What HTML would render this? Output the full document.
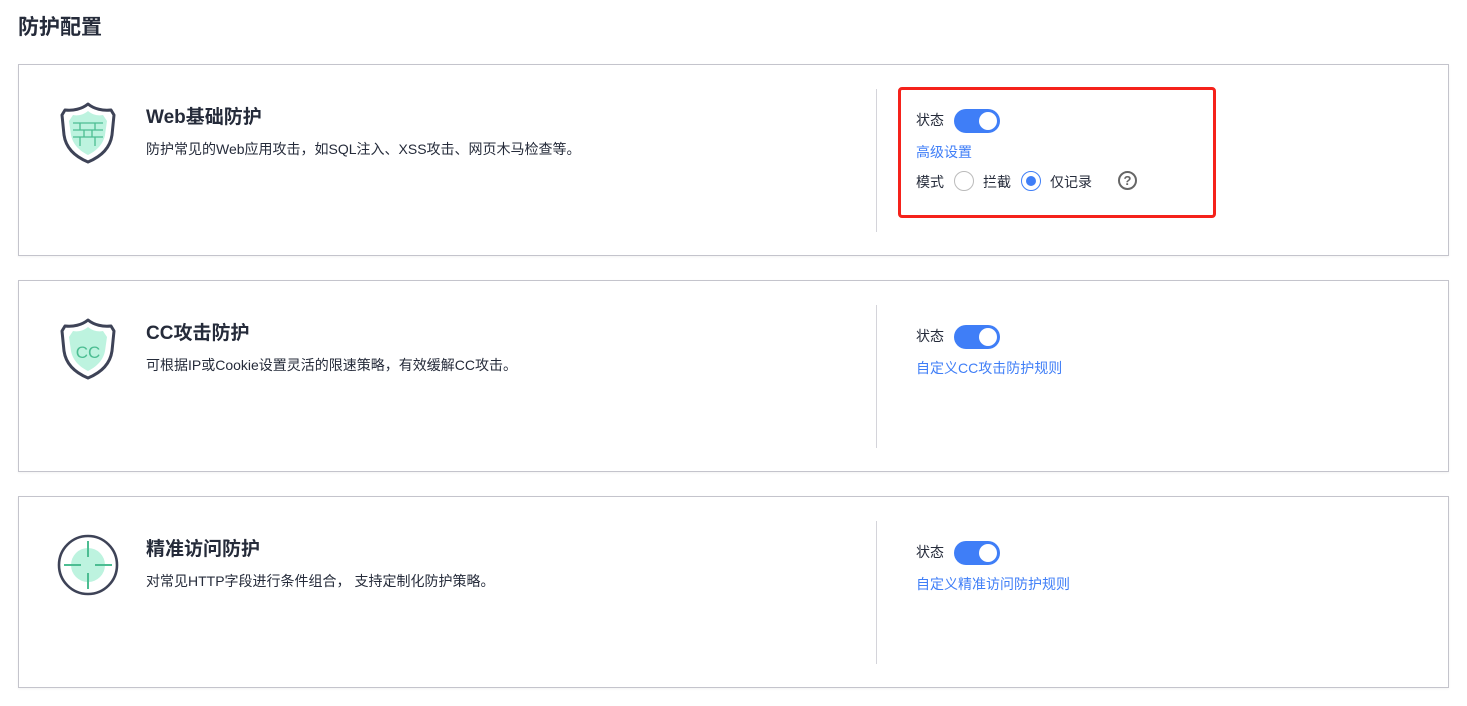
<!DOCTYPE html><html><head><meta charset="utf-8"><style>
body{margin:0;width:1467px;height:706px;background:#fff;font-family:"Liberation Sans","Noto Sans CJK SC",sans-serif;color:#252b3a;position:relative;overflow:hidden}
.h{position:absolute;left:18px;top:11px;font-size:21px;font-weight:bold;color:#252b3a}
.card{position:absolute;left:18px;width:1431px;height:192px;border:1px solid #c4c4cc;box-sizing:border-box;box-shadow:0 1px 2px rgba(0,0,0,.05)}
.ic{position:absolute;left:37px;top:36px}
.t{position:absolute;left:127px;top:41px;font-size:19px;font-weight:bold;line-height:24px}
.d{position:absolute;left:127px;top:75px;font-size:14px;line-height:18px}
.div{position:absolute;left:857px;top:24px;width:1px;height:143px;background:#d4d4da}
.s{position:absolute;left:897px;font-size:14px;line-height:18px}
.tg{position:absolute;left:935px;width:46px;height:24px;border-radius:12px;background:#3f7ef7}
.tg:after{content:"";position:absolute;right:3px;top:3px;width:18px;height:18px;border-radius:50%;background:#fff}
.a{position:absolute;left:897px;font-size:14px;line-height:18px;color:#3f7ef7}
.r{position:absolute;width:20px;height:20px;border:1px solid #bbb;border-radius:50%;box-sizing:border-box}
.red{position:absolute;left:898px;top:87px;width:318px;height:131px;border:3px solid #f5221b;border-radius:4px;box-sizing:border-box}
</style></head><body>
<div class="h">防护配置</div>

<div class="card" style="top:64px">
<svg class="ic" width="64" height="64" viewBox="0 0 62 64"><path d="M31 10 C36 14 41 15 46 14 L50 20 L48 34 C46 44 39 50 31 54 C23 50 16 44 14 34 L12 20 L16 14 C21 15 26 14 31 10Z" fill="#bdf3df"/><g stroke="#4cbd92" stroke-width="1.3" fill="none"><path d="M16 22H46M16 29H46M16 36H46M23 22V29M38 22V29M27 29V36M35 29V36M23 36V45M38 36V45"/></g><path d="M31 3 C25 8 16 10 8 9 L5 14 L7 34 C9 48 19 56 31 61 C43 56 53 48 55 34 L57 14 L54 9 C46 10 37 8 31 3Z" fill="none" stroke="#3e4357" stroke-width="3" stroke-linejoin="round"/></svg>
<div class="t">Web基础防护</div>
<div class="d">防护常见的Web应用攻击，如SQL注入、XSS攻击、网页木马检查等。</div>
<div class="div"></div>
<div class="s" style="top:46px">状态</div><div class="tg" style="top:44px"></div>
<div class="a" style="top:78px">高级设置</div>
<div class="s" style="top:108px">模式</div>
<div class="r" style="left:935px;top:106px"></div><div class="s" style="left:964px;top:108px">拦截</div>
<div class="r" style="left:1002px;top:106px;border-color:#3f7ef7"><div style="position:absolute;left:4px;top:4px;width:10px;height:10px;border-radius:50%;background:#3f7ef7"></div></div>
<div class="s" style="left:1031px;top:108px">仅记录</div>
<div style="position:absolute;left:1099px;top:106px;width:19px;height:19px;border:2px solid #666;border-radius:50%;box-sizing:border-box;font-size:13px;font-weight:bold;color:#666;text-align:center;line-height:15px">?</div>
</div>

<div class="card" style="top:280px">
<svg class="ic" width="64" height="64" viewBox="0 0 62 64"><path d="M31 10 C36 14 41 15 46 14 L50 20 L48 34 C46 44 39 50 31 54 C23 50 16 44 14 34 L12 20 L16 14 C21 15 26 14 31 10Z" fill="#bdf3df"/><text x="31" y="41" font-size="17" text-anchor="middle" fill="#4cbd92" font-family="Liberation Sans">CC</text><path d="M31 3 C25 8 16 10 8 9 L5 14 L7 34 C9 48 19 56 31 61 C43 56 53 48 55 34 L57 14 L54 9 C46 10 37 8 31 3Z" fill="none" stroke="#3e4357" stroke-width="3" stroke-linejoin="round"/></svg>
<div class="t">CC攻击防护</div>
<div class="d">可根据IP或Cookie设置灵活的限速策略，有效缓解CC攻击。</div>
<div class="div"></div>
<div class="s" style="top:46px">状态</div><div class="tg" style="top:44px"></div>
<div class="a" style="top:78px">自定义CC攻击防护规则</div>
</div>

<div class="card" style="top:496px">
<svg class="ic" width="64" height="64" viewBox="0 0 62 64"><circle cx="31" cy="32" r="29" fill="none" stroke="#3e4357" stroke-width="2.6"/><circle cx="31" cy="32" r="17" fill="#bdf3df"/><g stroke="#4cbd92" stroke-width="2"><path d="M31 8V24M31 40V56M7 32H24M38 32H55"/></g></svg>
<div class="t">精准访问防护</div>
<div class="d">对常见HTTP字段进行条件组合， 支持定制化防护策略。</div>
<div class="div"></div>
<div class="s" style="top:46px">状态</div><div class="tg" style="top:44px"></div>
<div class="a" style="top:78px">自定义精准访问防护规则</div>
</div>

<div class="red"></div>
</body></html>
